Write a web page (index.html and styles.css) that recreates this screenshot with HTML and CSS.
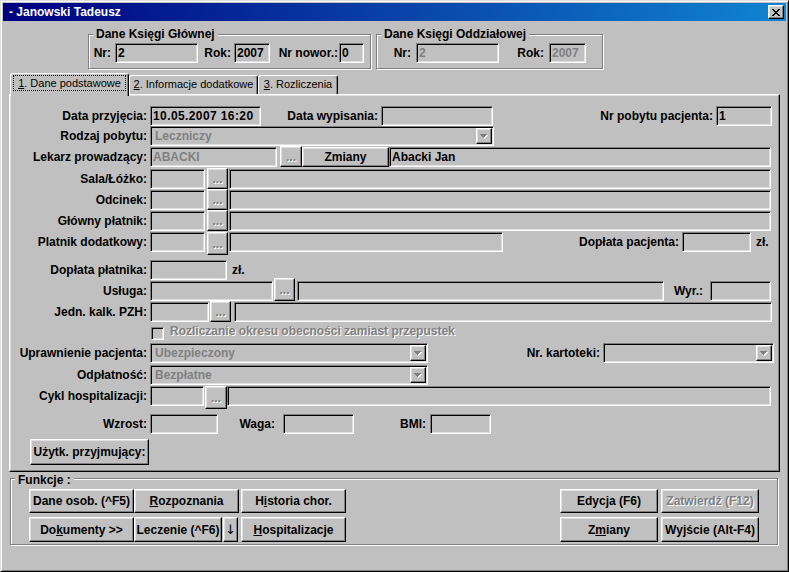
FILE: index.html
```html
<!DOCTYPE html>
<html lang="pl">
<head>
<meta charset="utf-8">
<title>Janowski Tadeusz</title>
<link rel="stylesheet" href="styles.css">
</head>
<body>
<div class="window">
  <div class="titlebar">
    <span class="title">- Janowski Tadeusz</span>
    <span class="close raised"><svg width="8" height="7" viewBox="0 0 8 7" shape-rendering="crispEdges"><path fill="#000" d="M0 0h2v1H0z M6 0h2v1H6z M1 1h2v1H1z M5 1h2v1H5z M2 2h4v1H2z M3 3h2v1H3z M2 4h4v1H2z M1 5h2v1H1z M5 5h2v1H5z M0 6h2v1H0z M6 6h2v1H6z"/></svg></span>
  </div>
  <div class="client">
    <div class="groups">
      <div class="grp g1">
        <span class="legend">Dane Księgi Głównej</span>
        <span class="gl w22 mr4">Nr:</span><span class="fld sunken w83">2</span>
        <span class="gl w33 mr3">Rok:</span><span class="fld sunken w36">2007</span>
        <span class="gl w68 mr1">Nr nowor.:</span><span class="fld sunken w25">0</span>
      </div>
      <div class="grp g2">
        <span class="legend">Dane Księgi Oddziałowej</span>
        <span class="gl w34 mr5">Nr:</span><span class="fld sunken w83 dis">2</span>
        <span class="gl w45 mr5">Rok:</span><span class="fld sunken w37 dis">2007</span>
      </div>
    </div>

    <div class="tabs">
      <div class="tab sel w119"><span class="focus"><u>1</u>. Dane podstawowe</span></div>
      <div class="tab w129"><u>2</u>. Informacje dodatkowe</div>
      <div class="tab w80"><u>3</u>. Rozliczenia</div>
    </div>

    <div class="panel">
      <div class="form">
        <div class="row">
          <span class="lbl">Data przyjęcia:</span>
          <span class="fld sunken w111 date">10.05.2007 16:20</span>
          <span class="l w117 mr3">Data wypisania:</span>
          <span class="fld sunken w112"></span>
          <span class="l w220 mr3">Nr pobytu pacjenta:</span>
          <span class="fld sunken w56">1</span>
        </div>
        <div class="row">
          <span class="lbl">Rodzaj pobytu:</span>
          <span class="combo sunken w344"><span class="txt">Leczniczy</span><span class="ddb raised"><svg width="8" height="5" viewBox="0 0 8 5" shape-rendering="crispEdges"><path fill="#fff" d="M1 1h7v1H1z M2 2h5v1H2z M3 3h3v1H3z M4 4h1v1H4z"/><path fill="#808080" d="M0 0h7v1H0z M1 1h5v1H1z M2 2h3v1H2z M3 3h1v1H3z"/></svg></span></span>
        </div>
        <div class="row">
          <span class="lbl">Lekarz prowadzący:</span>
          <span class="fld sunken w127 dis">ABACKI</span>
          <span class="dots raised ml3 w22">...</span>
          <span class="btn raised w87 h20">Zmiany</span>
          <span class="fld sunken w382">Abacki Jan</span>
        </div>
        <div class="row">
          <span class="lbl">Sala/Łóżko:</span>
          <span class="fld sunken w55"></span>
          <span class="dots raised ml2 w21">...</span>
          <span class="fld sunken ml1 w542"></span>
        </div>
        <div class="row">
          <span class="lbl">Odcinek:</span>
          <span class="fld sunken w55"></span>
          <span class="dots raised ml2 w21">...</span>
          <span class="fld sunken ml1 w542"></span>
        </div>
        <div class="row">
          <span class="lbl">Główny płatnik:</span>
          <span class="fld sunken w55"></span>
          <span class="dots raised ml2 w21">...</span>
          <span class="fld sunken ml1 w542"></span>
        </div>
        <div class="row">
          <span class="lbl">Platnik dodatkowy:</span>
          <span class="fld sunken w55"></span>
          <span class="dots raised tall ml2 w21">...</span>
          <span class="fld sunken ml1 w274"></span>
          <span class="l w176 mr3">Dopłata pacjenta:</span>
          <span class="fld sunken w69"></span>
          <span class="l ml5">zł.</span>
        </div>
        <div class="row">
          <span class="lbl">Dopłata płatnika:</span>
          <span class="fld sunken w77"></span>
          <span class="l ml5">zł.</span>
        </div>
        <div class="row">
          <span class="lbl">Usługa:</span>
          <span class="fld sunken w123"></span>
          <span class="dots raised tall up3 ml1 w21">...</span>
          <span class="fld sunken ml2 w367"></span>
          <span class="l w39 mr7">Wyr.:</span>
          <span class="fld sunken w61"></span>
        </div>
        <div class="row">
          <span class="lbl">Jedn. kalk. PZH:</span>
          <span class="fld sunken w59"></span>
          <span class="dots raised ml1 w21">...</span>
          <span class="fld sunken ml3 w538"></span>
        </div>
        <div class="row">
          <span class="lbl"></span>
          <span class="cb sunken ml1"></span>
          <span class="cbtext emb ml6">Rozliczanie okresu obecności zamiast przepustek</span>
        </div>
        <div class="row">
          <span class="lbl">Uprawnienie pacjenta:</span>
          <span class="combo sunken w278"><span class="txt">Ubezpieczony</span><span class="ddb raised"><svg width="8" height="5" viewBox="0 0 8 5" shape-rendering="crispEdges"><path fill="#fff" d="M1 1h7v1H1z M2 2h5v1H2z M3 3h3v1H3z M4 4h1v1H4z"/><path fill="#808080" d="M0 0h7v1H0z M1 1h5v1H1z M2 2h3v1H2z M3 3h1v1H3z"/></svg></span></span>
          <span class="l w172 mr3">Nr. kartoteki:</span>
          <span class="combo sunken w171"><span class="txt"></span><span class="ddb raised"><svg width="8" height="5" viewBox="0 0 8 5" shape-rendering="crispEdges"><path fill="#fff" d="M1 1h7v1H1z M2 2h5v1H2z M3 3h3v1H3z M4 4h1v1H4z"/><path fill="#808080" d="M0 0h7v1H0z M1 1h5v1H1z M2 2h3v1H2z M3 3h1v1H3z"/></svg></span></span>
        </div>
        <div class="row">
          <span class="lbl">Odpłatność:</span>
          <span class="combo sunken w278"><span class="txt">Bezpłatne</span><span class="ddb raised"><svg width="8" height="5" viewBox="0 0 8 5" shape-rendering="crispEdges"><path fill="#fff" d="M1 1h7v1H1z M2 2h5v1H2z M3 3h3v1H3z M4 4h1v1H4z"/><path fill="#808080" d="M0 0h7v1H0z M1 1h5v1H1z M2 2h3v1H2z M3 3h1v1H3z"/></svg></span></span>
        </div>
        <div class="row">
          <span class="lbl">Cykl hospitalizacji:</span>
          <span class="fld sunken w54"></span>
          <span class="dots raised tall ml1 w22">...</span>
          <span class="fld sunken w544"></span>
        </div>
        <div class="row">
          <span class="lbl">Wzrost:</span>
          <span class="fld sunken w68"></span>
          <span class="l w57 mr8">Waga:</span>
          <span class="fld sunken w71"></span>
          <span class="l w72 mr4">BMI:</span>
          <span class="fld sunken w61"></span>
        </div>
        <div class="row">
          <span class="btn raised ml20 w119 h26">Użytk. przyjmujący:</span>
        </div>
      </div>
    </div>

    <div class="grp funkcje">
      <span class="legend">Funkcje :</span>
      <div class="bgrid">
        <div class="brow">
          <span class="btn raised w105">Dane osob. (^F5)</span>
          <span class="btn raised w105"><span><u>R</u>ozpoznania</span></span>
          <span class="btn raised ml2 w105"><span>H<u>i</u>storia chor.</span></span>
        </div>
        <div class="brow">
          <span class="btn raised w105"><span>Do<u>k</u>umenty &gt;&gt;</span></span>
          <span class="btn raised w88">Leczenie (^F6)</span>
          <span class="btn raised ml1 w15 arrow">↓</span>
          <span class="btn raised ml3 w105"><span><u>H</u>ospitalizacje</span></span>
        </div>
      </div>
      <div class="bgrid">
        <div class="brow">
          <span class="btn raised w98">Edycja (F6)</span>
          <span class="btn raised ml3 w98 emb">Zatwierdź (F12)</span>
        </div>
        <div class="brow">
          <span class="btn raised w98"><span>Z<u>m</u>iany</span></span>
          <span class="btn raised ml3 w98">Wyjście (Alt-F4)</span>
        </div>
      </div>
    </div>
  </div>
</div>
</body>
</html>
```

FILE: styles.css
```css
* { box-sizing: border-box; margin: 0; padding: 0; }
html, body { width: 789px; height: 572px; overflow: hidden; }
body {
  background: #c0c0c0;
  font-family: "Liberation Sans", Arial, sans-serif;
  font-size: 12px;
  font-weight: bold;
  color: #000;
}

.window {
  width: 789px;
  height: 572px;
  display: flex;
  flex-direction: column;
  border: 1px solid;
  border-color: #dfdfdf #000 #000 #dfdfdf;
  box-shadow: inset 1px 1px #fff, inset -1px -1px #808080;
  padding: 2px;
  background: #c0c0c0;
}

.titlebar {
  flex: none;
  height: 18px;
  display: flex;
  align-items: center;
  justify-content: space-between;
  padding: 0 2px 0 6px;
  background: linear-gradient(to right, #000080, #1084d0);
  color: #fff;
}
.title { line-height: 18px; white-space: nowrap; }
.close {
  width: 16px;
  height: 14px;
  display: flex;
  align-items: center;
  justify-content: center;
}
.close svg { display: block; }

.raised {
  border: 1px solid;
  border-color: #fff #000 #000 #fff;
  box-shadow: inset -1px -1px #808080, inset 1px 1px #dfdfdf;
  background: #c0c0c0;
}
.sunken {
  border: 1px solid;
  border-color: #808080 #fff #fff #808080;
  box-shadow: inset 1px 1px #000, inset -1px -1px #dfdfdf;
  background: #c0c0c0;
}

.client { flex: 1; display: flex; flex-direction: column; }

/* group boxes */
.groups { flex: none; display: flex; align-items: flex-start; margin: 13px 0 0 85px; }
.grp {
  position: relative;
  display: flex;
  align-items: flex-start;
  border: 1px solid #808080;
  box-shadow: inset 1px 1px #fff, 1px 1px #fff;
}
.g1 { width: 283px; height: 35px; padding-top: 8px; }
.g2 { width: 227px; height: 35px; padding-top: 8px; margin-left: 5px; }
.legend {
  position: absolute;
  left: 4px;
  top: -8px;
  line-height: 14px;
  padding: 0 3px;
  background: #c0c0c0;
  white-space: nowrap;
}
.gl { flex: none; line-height: 20px; text-align: right; white-space: nowrap; }

/* tabs */
.tabs { flex: none; display: flex; align-items: flex-end; height: 21px; margin: 4px 0 0 7px; }
.tab {
  flex: none;
  height: 19px;
  border: 1px solid;
  border-bottom: none;
  border-color: #fff #000 transparent #fff;
  border-radius: 3px 3px 0 0;
  box-shadow: inset -1px 0 #808080;
  background: #c0c0c0;
  font-size: 11px;
  font-weight: normal;
  line-height: 16px;
  text-align: center;
  white-space: nowrap;
}
.tab.sel {
  height: 23px;
  margin-bottom: -2px;
  padding-top: 1px;
  position: relative;
  z-index: 1;
}
.focus {
  display: inline-block;
  border: 1px dotted #000;
  line-height: 14px;
  padding: 0 4px;
}

/* tab page */
.panel {
  flex: none;
  width: 771px;
  height: 378px;
  margin-left: 6px;
  border: 1px solid;
  border-color: #fff #000 #000 #fff;
  box-shadow: inset -1px -1px #808080, inset 1px 1px #dfdfdf;
  padding-top: 11px;
}
.form {
  display: grid;
  grid-template-rows: 20px 21px 22px 21px 21px 21px 28px 21px 21px 24px 17px 22px 21px 28px 25px 26px;
}
.row { display: flex; align-items: flex-start; }
.lbl {
  flex: none;
  width: 137px;
  margin-right: 3px;
  text-align: right;
  line-height: 20px;
  white-space: nowrap;
}
.l { flex: none; text-align: right; line-height: 20px; white-space: nowrap; }

.fld {
  flex: none;
  height: 20px;
  padding-left: 2px;
  line-height: 18px;
  white-space: nowrap;
  overflow: hidden;
}
.date { letter-spacing: 0.4px; }
.dis { color: #808080; }
.emb { color: #808080; text-shadow: 1px 1px 0 #fff; }

.dots {
  flex: none;
  height: 21px;
  margin-top: -1px;
  line-height: 20px;
  text-align: center;
  color: #808080;
  text-shadow: 1px 1px 0 #fff;
}
.dots.tall { height: 23px; margin-top: 0; line-height: 22px; }
.dots.tall.up3 { margin-top: -3px; }

.combo {
  flex: none;
  height: 20px;
  display: flex;
  align-items: center;
  padding: 1px 1px 1px 4px;
}
.combo .txt {
  flex: 1;
  line-height: 16px;
  color: #808080;
  white-space: nowrap;
  overflow: hidden;
}
.ddb {
  flex: none;
  width: 16px;
  height: 16px;
  display: flex;
  align-items: center;
  justify-content: center;
}
.ddb svg { display: block; }

.cb { flex: none; width: 13px; height: 13px; margin-top: 1px; }
.cbtext { line-height: 14px; margin-top: -2px; white-space: nowrap; }

.btn {
  flex: none;
  display: flex;
  align-items: center;
  justify-content: center;
  white-space: nowrap;
  height: 100%;
}
.arrow { font-family: "DejaVu Sans", sans-serif; font-weight: normal; font-size: 13px; }
.h20 { height: 20px; }
.h26 { height: 26px; }

/* functions */
.funkcje {
  flex: none;
  width: 768px;
  height: 67px;
  margin: 6px 0 0 7px;
  padding: 10px 18px 0 18px;
  justify-content: space-between;
}
.funkcje .legend { top: -6px; }
.bgrid { display: grid; grid-template-rows: 24px 25px; row-gap: 4px; }
.brow { display: flex; }

/* spacing & sizes */
.ml1 { margin-left: 1px; } .ml2 { margin-left: 2px; } .ml3 { margin-left: 3px; }
.ml5 { margin-left: 5px; } .ml6 { margin-left: 6px; } .ml20 { margin-left: 20px; }
.mr1 { margin-right: 1px; } .mr3 { margin-right: 3px; } .mr4 { margin-right: 4px; }
.mr5 { margin-right: 5px; } .mr7 { margin-right: 7px; } .mr8 { margin-right: 8px; }

.w15 { width: 15px; } .w21 { width: 21px; } .w22 { width: 22px; } .w25 { width: 25px; }
.w33 { width: 33px; } .w34 { width: 34px; } .w36 { width: 36px; } .w37 { width: 37px; }
.w39 { width: 39px; } .w45 { width: 45px; } .w54 { width: 54px; } .w55 { width: 55px; }
.w56 { width: 56px; } .w57 { width: 57px; } .w59 { width: 59px; } .w61 { width: 61px; }
.w68 { width: 68px; } .w69 { width: 69px; } .w71 { width: 71px; } .w72 { width: 72px; }
.w77 { width: 77px; } .w80 { width: 80px; } .w83 { width: 83px; } .w87 { width: 87px; }
.w88 { width: 88px; } .w98 { width: 98px; } .w105 { width: 105px; } .w111 { width: 111px; }
.w112 { width: 112px; } .w117 { width: 117px; } .w119 { width: 119px; } .w123 { width: 123px; }
.w127 { width: 127px; } .w129 { width: 129px; } .w171 { width: 171px; } .w172 { width: 172px; }
.w176 { width: 176px; } .w220 { width: 220px; } .w274 { width: 274px; } .w278 { width: 278px; }
.w344 { width: 344px; } .w367 { width: 367px; } .w382 { width: 382px; } .w538 { width: 538px; }
.w542 { width: 542px; } .w544 { width: 544px; }
```
